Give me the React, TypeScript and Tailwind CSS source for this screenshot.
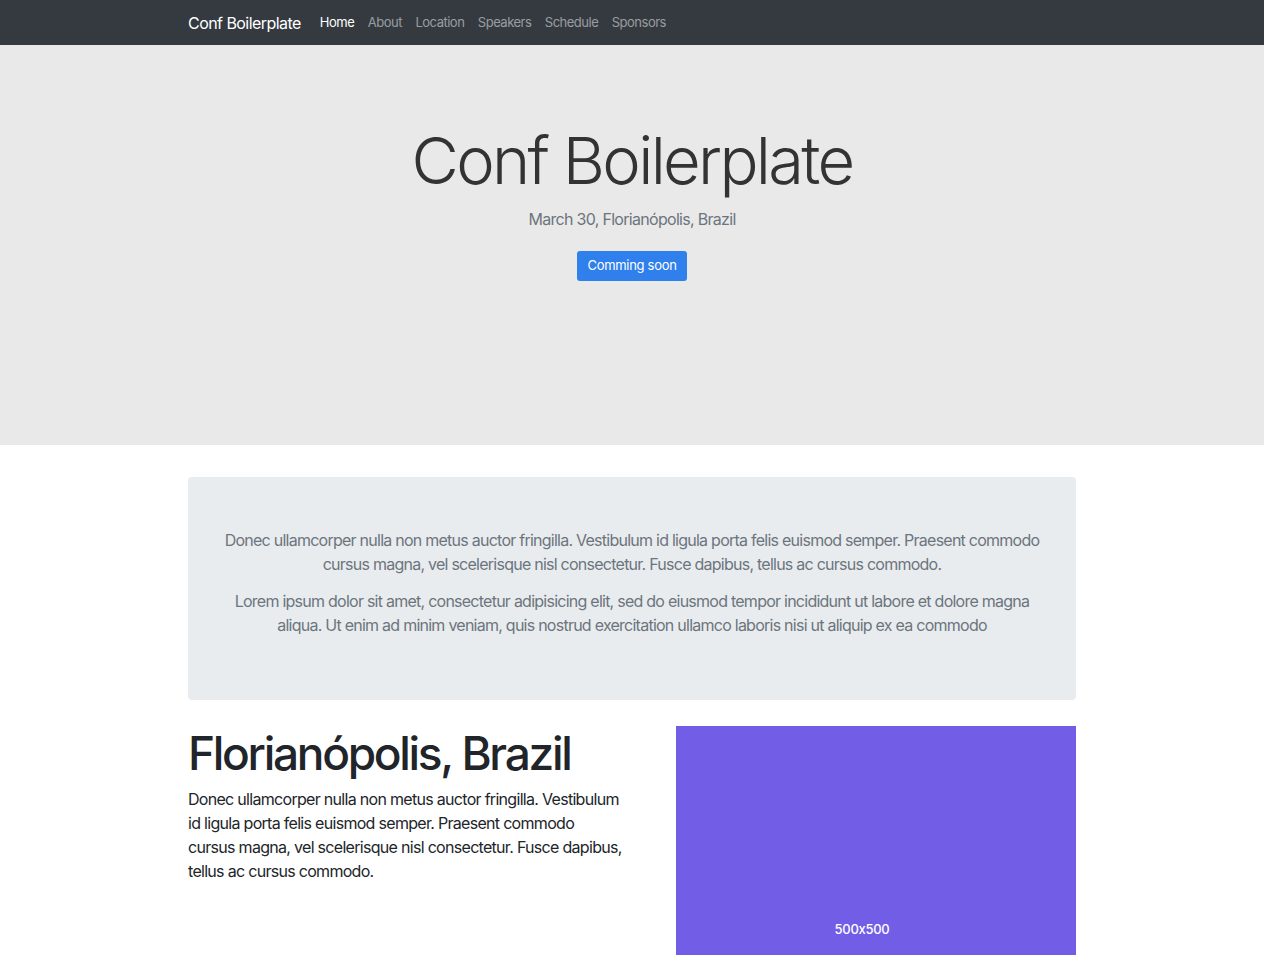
export default function App() {
  const links = ['Home', 'About', 'Location', 'Speakers', 'Schedule', 'Sponsors']

  return (
    <div className="min-h-screen bg-white [font-feature-settings:'calt'_0]" style={{ fontFamily: 'Inter, "Noto Sans", sans-serif' }}>
      {/* Navbar */}
      <nav className="bg-[#343a40] h-[45px]">
        <div className="w-[888px] mx-auto h-full flex items-center">
          <a className="text-white text-[16px] tracking-[-0.55px] mr-[19px]">Conf Boilerplate</a>
          <ul className="flex items-center gap-[13.5px] text-[13px] tracking-[-0.5px]">
            {links.map((l, idx) => (
              <li key={idx} className={idx === 0 ? 'text-white' : 'text-white/50'}>
                {l}
              </li>
            ))}
          </ul>
        </div>
      </nav>

      {/* Hero */}
      <header className="bg-[#e9e9e9] h-[400px] flex flex-col items-center pt-[78px]">
        <h1 className="text-[65px] leading-[76px] font-light text-[#333] tracking-[-2.7px]">Conf Boilerplate</h1>
        <p className="text-[16px] leading-[24px] text-[#6c757d] mt-[8px] tracking-[-0.7px]">March 30, Florianópolis, Brazil</p>
        <button className="mt-[20px] bg-[#2f80ed] text-white text-[13px] tracking-[-0.3px] rounded-[3px] h-[30px] px-[10px]">
          Comming soon
        </button>
      </header>

      {/* Content */}
      <main className="w-[888px] mx-auto pt-[32px]">
        <section className="bg-[#e9ecef] rounded-[4px] px-[32px] pt-[51px] pb-[50px] text-center text-[16px] leading-[24px] text-[#6c757d] tracking-[-0.75px]">
          <p className="mb-[13px]">
            Donec ullamcorper nulla non metus auctor fringilla. Vestibulum id ligula porta felis euismod semper. Praesent commodo cursus magna, vel scelerisque nisl consectetur. Fusce dapibus, tellus ac cursus commodo.
          </p>
          <p className="mb-[13px]">
            Lorem ipsum dolor sit amet, consectetur adipisicing elit, sed do eiusmod tempor incididunt ut labore et dolore magna aliqua. Ut enim ad minim veniam, quis nostrud exercitation ullamco laboris nisi ut aliquip ex ea commodo
          </p>
        </section>

        <section className="flex mt-[26px]">
          <div className="w-[444px] pr-[10px]">
            <h2 className="text-[46px] leading-[54px] font-medium text-[#212529] tracking-[-2.3px]">Florianópolis, Brazil</h2>
            <p className="text-[16px] leading-[24px] text-[#212529] mt-[7px] tracking-[-0.7px]">
              Donec ullamcorper nulla non metus auctor fringilla. Vestibulum id ligula porta felis euismod semper. Praesent commodo cursus magna, vel scelerisque nisl consectetur. Fusce dapibus, tellus ac cursus commodo.
            </p>
          </div>
          <div className="w-[444px] flex justify-end">
            <div className="w-[400px] h-[400px] bg-[#715de6] flex items-center justify-center">
              <span className="text-white text-[13px] font-medium tracking-[-0.3px] mr-[28px] mt-[8px]">500x500</span>
            </div>
          </div>
        </section>
      </main>
    </div>
  )
}
